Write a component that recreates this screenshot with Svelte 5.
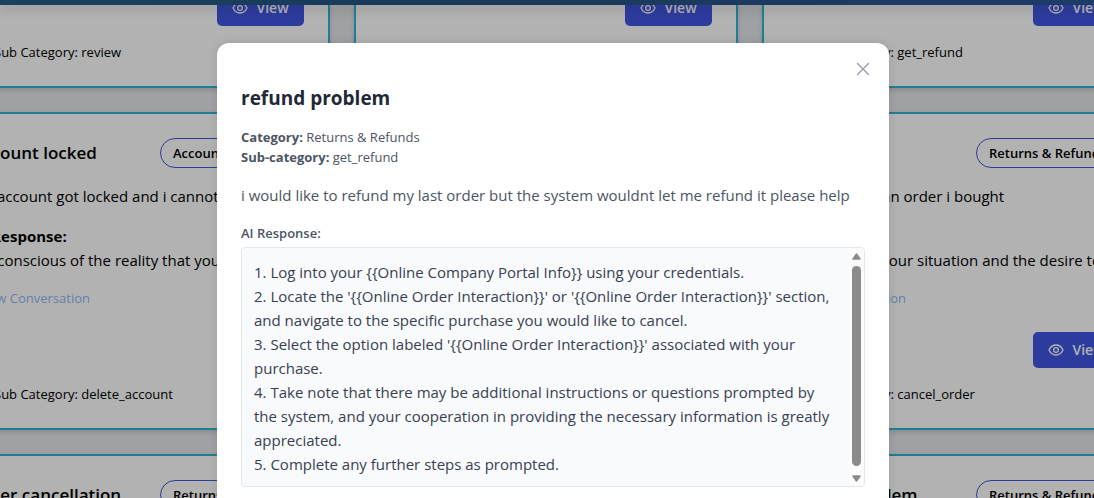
<script>
  const tickets = [
    { title: 'Account locked', tag: 'Account', text: 'My account got locked and i cannot', reply: "I'm conscious of the reality that you", sub: 'delete_account', label: 'AI Response:' },
    {},
    { title: '', tag: 'Returns & Refunds', text: 'i want cancel an order i bought', reply: 'I understand your situation and the desire to', sub: 'cancel_order', label: '' }
  ];
  const upper = ['review', '', 'get_refund'];
  const lower = [
    { title: 'order cancellation', tag: 'Returns' },
    {},
    { title: 'refund problem', tag: 'Returns & Refunds' }
  ];
  const steps = [
    '1. Log into your {{Online Company Portal Info}} using your credentials.',
    "2. Locate the '{{Online Order Interaction}}' or '{{Online Order Interaction}}' section, and navigate to the specific purchase you would like to cancel.",
    "3. Select the option labeled '{{Online Order Interaction}}' associated with your purchase.",
    '4. Take note that there may be additional instructions or questions prompted by the system, and your cooperation in providing the necessary information is greatly appreciated.',
    '5. Complete any further steps as prompted.'
  ];
</script>

{#snippet viewButton()}
  <button class="view" type="button">
    <svg width="16" height="16" viewBox="0 0 24 24" fill="none" stroke="currentColor" stroke-width="2" stroke-linecap="round" stroke-linejoin="round" aria-hidden="true">
      <path d="M1.5 12S5 4.500 12 4.500 22.500 12 22.500 12 19 19.500 12 19.500 1.500 12 1.500 12z" />
      <circle cx="12" cy="12" r="3.500" />
    </svg>
    View
  </button>
{/snippet}

<div class="page">
  <header></header>
  <main inert>
    {#each upper as sub}
      <article class="card top">
        {@render viewButton()}
        <p class="sub">{#if sub}Sub Category: {sub}{/if}</p>
      </article>
    {/each}
    {#each tickets as t}
      <article class="card">
        {#if t.tag}
          <div class="head"><h3>{t.title}</h3><span class="tag">{t.tag}</span></div>
          <p class="text">{t.text}</p>
          <p class="label">{t.label}</p>
          <p class="reply">{t.reply}</p>
          <a class="link" href="#conversation">View Conversation</a>
          {@render viewButton()}
          <p class="sub">Sub Category: {t.sub}</p>
        {/if}
      </article>
    {/each}
    {#each lower as t}
      <article class="card">
        {#if t.tag}
          <div class="head"><h3>{t.title}</h3><span class="tag">{t.tag}</span></div>
        {/if}
      </article>
    {/each}
  </main>

  <div class="overlay">
    <div class="modal" role="dialog" aria-modal="true" aria-labelledby="title">
      <button class="close" type="button" aria-label="Close">
        <svg width="14" height="14" viewBox="0 0 14 14" fill="none" stroke="currentColor" stroke-width="1.500" stroke-linecap="round" aria-hidden="true"><path d="M1.500 1.500l11 11M12.500 1.500l-11 11" /></svg>
      </button>
      <h2 id="title">refund problem</h2>
      <p class="meta"><strong>Category:</strong> Returns &amp; Refunds<br /><strong>Sub-category:</strong> get_refund</p>
      <p class="message">i would like to refund my last order but the system wouldnt let me refund it please help</p>
      <h4>AI Response:</h4>
      <div class="answer">
        <div class="steps">
          {#each steps as step}<p>{step}</p>{/each}
        </div>
        <div class="scroll" aria-hidden="true">
          <svg width="9" height="7" viewBox="0 0 9 7"><path d="M4.500 1L8 6H1z" fill="#8b8b8b" stroke="#8b8b8b" stroke-width="1.500" stroke-linejoin="round" /></svg>
          <div class="thumb"></div>
          <svg width="9" height="7" viewBox="0 0 9 7"><path d="M4.500 6L8 1H1z" fill="#8b8b8b" stroke="#8b8b8b" stroke-width="1.500" stroke-linejoin="round" /></svg>
        </div>
      </div>
    </div>
  </div>
</div>

<style>
  :global(body) { margin: 0; }
  .page {
    position: relative;
    height: 100vh;
    overflow: hidden;
    background: #e5e7eb;
    color: #000;
    font: 15px/24px "Segoe UI", "Open Sans", sans-serif;
  }
  .page * { box-sizing: border-box; }
  h2, h3, h4, p { margin: 0; }
  button { font: inherit; border: 0; cursor: pointer; }
  header {
    position: relative;
    z-index: 1;
    height: 5px;
    background: linear-gradient(90deg, #26608a, #25527f 40%, #2b5394);
    box-shadow: 0 4px 12px rgba(0, 0, 0, 0.2);
  }
  main {
    display: grid;
    grid-template-columns: repeat(3, 384px);
    grid-template-rows: 83px 318px 318px;
    gap: 24px;
    justify-content: center;
    padding-right: 2px;
  }
  .card {
    display: flex;
    flex-direction: column;
    min-width: 0;
    padding: 24px;
    background: #fff;
    border: 2px solid #2fb5d5;
    box-shadow: 0 2px 5px rgba(0, 0, 0, 0.15);
    white-space: nowrap;
  }
  .top {
    justify-content: flex-end;
    border-top: 0;
    padding-top: 0;
    overflow: hidden;
  }
  .head { display: flex; justify-content: space-between; align-items: center; height: 30px; }
  h3 { font-size: 17px; font-weight: 600; }
  .tag {
    flex: none;
    width: 144px;
    height: 30px;
    margin-left: auto;
    padding: 0 12px;
    overflow: hidden;
    border: 1px solid #4355dc;
    border-radius: 15px;
    font-size: 13px;
    font-weight: 600;
    line-height: 28px;
  }
  .text { margin-top: 16px; }
  .label { height: 24px; margin-top: 16px; font-weight: 700; }
  .link { margin-top: 16px; padding-left: 6px; font-size: 13px; line-height: 20px; color: #93b8f5; text-decoration: none; }
  .view {
    display: flex;
    flex: none;
    align-self: flex-end;
    align-items: center;
    justify-content: center;
    gap: 8px;
    width: 87px;
    height: 36px;
    margin-top: 24px;
    padding: 0;
    border-radius: 5px;
    background: #4255e2;
    color: #fff;
    font-size: 14px;
    font-weight: 600;
  }
  .sub { flex: none; height: 20px; margin-top: 16px; padding-left: 22px; font-size: 13px; line-height: 20px; }
  .overlay {
    position: absolute;
    inset: 0;
    z-index: 2;
    display: flex;
    justify-content: center;
    align-items: flex-start;
    padding: 43px 0 0 12px;
    background: rgba(0, 0, 0, 0.3);
  }
  .modal {
    position: relative;
    width: 100%;
    max-width: 672px;
    min-height: 100%;
    padding: 41px 24px 24px;
    border-radius: 12px 12px 0 0;
    background: #fff;
    color: #4b5563;
    box-shadow: 0 0 10px rgba(0, 0, 0, 0.12);
  }
  .close {
    position: absolute;
    top: 14px;
    right: 14px;
    display: grid;
    place-items: center;
    width: 24px;
    height: 24px;
    padding: 0;
    background: none;
    color: #9ca3af;
  }
  h2 { color: #1f2937; font-size: 19px; font-weight: 700; line-height: 28px; }
  .meta { margin-top: 15px; font-size: 13px; line-height: 20px; }
  .message { margin-top: 16px; white-space: nowrap; }
  h4 { margin: 16px 0 4px; font-size: 13px; font-weight: 600; line-height: 20px; }
  .answer {
    display: flex;
    height: 240px;
    overflow: hidden;
    border: 1px solid #e5e7eb;
    border-radius: 4px;
    background: #f9fafb;
    color: #374151;
  }
  .steps { flex: 1; padding: 12px; }
  .scroll {
    display: flex;
    flex-direction: column;
    align-items: center;
    justify-content: space-between;
    width: 15px;
    padding: 5px 0 4px;
    background: #fcfcfc;
  }
  .thumb { flex: 1; width: 9px; margin: 6px 0 9px; border-radius: 5px; background: #8b8b8b; }
</style>
